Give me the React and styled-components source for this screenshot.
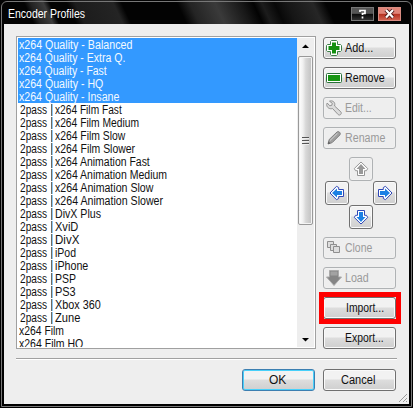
import React, { useLayoutEffect, useRef } from "react";
import styled, { createGlobalStyle, css } from "styled-components";

const Global = createGlobalStyle`
  * { box-sizing: border-box; }
  html, body { margin: 0; background: #000; overflow: hidden; }
  body { font: 12px/13px "Liberation Sans", Arial, sans-serif; color: #000; }
`;

const Window = styled.div`
  position: relative;
  width: 413px;
  height: 408px;
  padding: 4px;
  background: #000;
  display: flex;
  flex-direction: column;
`;
const FrameLine = styled.div`
  position: absolute;
  inset: 1px 1px 1px 1px;
  border: 1px solid #777;
  border-radius: 6px 6px 0 0;
  pointer-events: none;
`;
const TitleBar = styled.header`
  height: 24px;
  margin: -4px -4px 0;
  padding: 4px 12px 0 8px;
  display: flex;
  align-items: center;
  color: #fff;
  background:
    linear-gradient(65deg, transparent 8%, #222 9.5%, #3c3c3c 12.5%, transparent 14%, transparent 18%, #1c1c1c 20%, #242424 29%, transparent 31%, transparent 44%, #242424 47%, #3a3a3a 53%, #181818 59%, transparent 62%, #1c1c1c 64%, #080808 67%, #161616 70%, #262626 76%, transparent 79%),
    #030303;
`;
const Caption = styled.div`
  flex: 1;
  height: 13px;
`;
const CaptionButton = styled.div`
  width: 23px;
  height: 14px;
  margin-left: 4px;
  border: 1px solid ${(p) => (p.$close ? "#d98c82" : "#777")};
  background: ${(p) =>
    p.$close
      ? "linear-gradient(#e08478 0 45%, #b53020 50%, #d0604e)"
      : "linear-gradient(#555 0 45%, #080808 50%, #303030)"};
  svg { display: block; }
`;
const Client = styled.main`
  width: 405px;
  height: 380px;
  background: #eee;
  padding: 12px 12px 0;
  display: flex;
  flex-direction: column;
  position: relative;
`;
const Body = styled.div`
  display: flex;
  height: 322px;
  gap: 7px;
`;
const ListBox = styled.div`
  width: 300px;
  height: 313px;
  border: 1px solid #a0a0a0;
  padding: 1px;
  background: #fff;
  display: flex;
`;
const Rows = styled.div`
  width: 279px;
  height: 309px;
  overflow: hidden;
`;
const Row = styled.div`
  height: 13px;
  display: flex;
  padding: 1px 0 0 ${(p) => (p.$pass ? 2 : 1)}px;
  color: ${(p) => (p.$selected ? "#f4f9ff" : "#111")};
  background: ${(p) => (p.$selected ? "#3399ff" : "#fff")};
`;
const Bar = styled.span`
  width: 2px;
  height: 12px;
  margin: 0 2px 0 4px;
  border-left: 1px solid #6d6a62;
  background: #8cc8f4;
`;
const ScrollBar = styled.div`
  width: 17px;
  background: #eee;
  display: flex;
  flex-direction: column;
  align-items: center;
  svg { display: block; }
`;
const Thumb = styled.div`
  width: 15px;
  height: 169px;
  margin: 0 0 107px;
  border: 1px solid #999;
  border-radius: 2px;
  background: linear-gradient(90deg, #fff, #f0f0f0 30%, #d8d8d8 52%, #c0c0c0);
  box-shadow: inset 0 0 0 1px #f4f4f4;
  display: flex;
  align-items: center;
  justify-content: center;
`;
const Side = styled.div`
  width: 74px;
  padding-top: 1px;
  display: flex;
  flex-direction: column;
  gap: 8px;
`;
const face = css`
  border: 1px solid ${(p) => (p.$disabled ? "#afb2b4" : "#707070")};
  border-radius: 3px;
  background: ${(p) =>
    p.$disabled ? "#eee" : "linear-gradient(#f2f2f2 0 45%, #dddddd 50%, #cfcfcf)"};
  box-shadow: inset 0 0 0 1px ${(p) => (p.$disabled ? "#f1f1f1" : "#fafafa")};
`;
const Button = styled.div`
  ${face}
  width: 73px;
  height: 22px;
  flex: none;
  display: flex;
  align-items: center;
  padding-left: ${(p) => p.$indent ?? 2}px;
  color: ${(p) => (p.$disabled ? "#9a9a9a" : "#111")};
  position: relative;
  ${(p) =>
    p.$primary &&
    css`
      border-color: #3c7fb1;
      box-shadow: inset 0 0 0 1px #48d0fa;
    `}
`;
const IconSlot = styled.span`
  width: 19px;
  height: 16px;
  svg { display: block; }
`;
const Highlight = styled.div`
  position: absolute;
  inset: -6px -6px -6px -5px;
  border: 5px solid #fe0000;
`;
const Pad = styled.div`
  display: grid;
  grid-template: repeat(3, 24px) / repeat(3, 24px);
  margin-left: 2px;
`;
const PadButton = styled.div`
  ${face}
  grid-area: ${(p) => p.$area};
  display: flex;
  align-items: center;
  justify-content: center;
`;
const Separator = styled.div`
  height: 2px;
  width: 381px;
  background: linear-gradient(#a0a0a0 50%, #fff 50%);
`;
const Footer = styled.footer`
  display: flex;
  gap: 8px;
  padding: 9px 0 0 226px;
`;
const Grip = styled.svg`
  position: absolute;
  right: 1px;
  bottom: 1px;
`;
const FitBox = styled.span`
  display: block;
  height: 13px;
  flex: none;
  white-space: pre;
`;
const FitInner = styled.span`
  display: inline-block;
  transform-origin: 0 50%;
`;

function Fit({ w, children }) {
  const box = useRef(null);
  const inner = useRef(null);
  useLayoutEffect(() => {
    box.current.style.width = `${w}px`;
    inner.current.style.transform = `scaleX(${w / inner.current.offsetWidth})`;
  }, [w]);
  return (
    <FitBox ref={box}>
      <FitInner ref={inner}>{children}</FitInner>
    </FitBox>
  );
}

const profiles = [
  ["x264 Quality - Balanced", 113, "selected"],
  ["x264 Quality - Extra Q.", 106, "selected"],
  ["x264 Quality - Fast", 88, "selected"],
  ["x264 Quality - HQ", 84, "selected"],
  ["x264 Quality - Insane", 100, "selected"],
  ["x264 Film Fast", 67, "pass"],
  ["x264 Film Medium", 84, "pass"],
  ["x264 Film Slow", 70, "pass"],
  ["x264 Film Slower", 80, "pass"],
  ["x264 Animation Fast", 95, "pass"],
  ["x264 Animation Medium", 112, "pass"],
  ["x264 Animation Slow", 98, "pass"],
  ["x264 Animation Slower", 108, "pass"],
  ["DivX Plus", 46, "pass"],
  ["XviD", 23, "pass"],
  ["DivX", 24, "pass"],
  ["iPod", 21, "pass"],
  ["iPhone", 33, "pass"],
  ["PSP", 21, "pass"],
  ["PS3", 21, "pass"],
  ["Xbox 360", 46, "pass"],
  ["Zune", 25, "pass"],
  ["x264 Film", 45, "plain"],
  ["x264 Film HQ", 64, "plain"],
];

const icons = {
  add: (
    <>
      <path
        d="M4.500 1.500l1-1h5l1 1v3h3l1 1v5l-1 1h-3v3l-1 1h-5l-1-1v-3h-3l-1-1v-5l1-1h3z"
        fill="#fff"
        stroke="#3c8048"
      />
      <path d="M6 2.500h4V6h3.500v4H10v3.500H6V10H2.500V6H6z" fill="#12900f" />
    </>
  ),
  remove: (
    <>
      <rect x=".5" y="3.500" width="15" height="9" rx="1" fill="#fff" stroke="#287038" />
      <rect x="2" y="5" width="12" height="6" fill="#179512" />
    </>
  ),
  edit: (
    <path
      d="M3.500 1.200C5.800.2 8.800 1.500 8.800 4.300L8.600 6l6.200 5.800c1.500 1.700-.8 4.300-2.600 2.800L6.500 8.500C3.500 9.400.6 7.500.7 4.500L1.200 3l2.600 2.800 2-.5.500-2z"
      fill="#dcdcdc"
      stroke="#929292"
    />
  ),
  rename: (
    <>
      <path d="M2 14l1.200-4.500L11 2q1.300-1 2.600.3t.3 2.600L6.200 12.600z" fill="#a0a0a0" stroke="#808080" />
      <path d="M4 10.500l7.500-7.300" stroke="#d5d5d5" />
      <path d="M2 14l.6-2.400 1.700 1.700z" fill="#555" />
    </>
  ),
  clone: (
    <g fill="#dedede" stroke="#8f8f8f">
      <path d="M1.500 1.500h6v6h-6z" />
      <path d="M4.500 4.500h6v6h-6z" />
      <path d="M7.500 6.500h6v6h-6z" />
    </g>
  ),
  load: (
    <>
      <path d="M3.500.5h9V7h3L8 15.500.5 7h3z" fill="#858585" stroke="#aaa" />
      <path d="M4.500 1.500h7v4h-7z" fill="#a2a2a2" />
    </>
  ),
};

const Icon = ({ name }) => (
  <IconSlot>
    <svg width="16" height="16" viewBox="0 0 16 16" fill="none">
      {icons[name]}
    </svg>
  </IconSlot>
);

const Arrow = ({ angle, off }) => (
  <svg width="16" height="16" viewBox="0 0 16 16">
    <g transform={`rotate(${angle} 8 8)`}>
      <path
        d="M8 1L14.700 7.500L13.500 9.700H11.500V14.500H4.500V9.700H2.500L1.300 7.500z"
        fill="#fff"
        stroke={off ? "#969696" : "#3048b8"}
        strokeLinejoin="round"
      />
      <path d="M8 3L12.500 8H10V13H6V8H3.500z" fill={off ? "#999" : "#1c80e4"} />
    </g>
  </svg>
);

const Action = ({ icon, label, w, disabled }) => (
  <Button $disabled={disabled}>
    <Icon name={icon} />
    <Fit w={w}>{label}</Fit>
  </Button>
);

export default function App() {
  return (
    <>
      <Global />
      <Window>
        <TitleBar>
          <Caption>
            <Fit w={77}>Encoder Profiles</Fit>
          </Caption>
          <CaptionButton>
            <svg width="21" height="12" fill="none">
              <path d="M8 4V2.500h5V5.500h-2.500V7M10.500 8.500v2" stroke="#fff" strokeWidth="1.700" />
            </svg>
          </CaptionButton>
          <CaptionButton $close>
            <svg width="21" height="12" fill="none">
              <path d="M7 2l7 7.500M14 2L7 9.500" stroke="#411" strokeWidth="4" />
              <path d="M7 2l7 7.500M14 2L7 9.500" stroke="#fff" strokeWidth="2.200" />
            </svg>
          </CaptionButton>
        </TitleBar>
        <Client>
          <Body>
            <ListBox>
              <Rows>
                {profiles.map(([name, w, kind]) => (
                  <Row key={kind + name} $selected={kind === "selected"} $pass={kind === "pass"}>
                    {kind === "pass" && (
                      <>
                        <Fit w={27}>2pass</Fit>
                        <Bar />
                      </>
                    )}
                    <Fit w={w}>{name}</Fit>
                  </Row>
                ))}
              </Rows>
              <ScrollBar>
                <svg width="17" height="18">
                  <path d="M5 10h7L8.500 6.500z" />
                </svg>
                <Thumb>
                  <svg width="7" height="8">
                    <path d="M0 .5h7M0 3.500h7M0 6.500h7" stroke="#555" />
                    <path d="M0 1.500h7M0 4.500h7M0 7.500h7" stroke="#eee" />
                  </svg>
                </Thumb>
                <svg width="17" height="15">
                  <path d="M5 6h7L8.500 9.500z" />
                </svg>
              </ScrollBar>
            </ListBox>
            <Side>
              <Action icon="add" label="Add..." w={28} />
              <Action icon="remove" label="Remove" w={40} />
              <Action icon="edit" label="Edit..." w={27} disabled />
              <Action icon="rename" label="Rename" w={40} disabled />
              <Pad>
                <PadButton $area="1 / 2" $disabled><Arrow angle={0} off /></PadButton>
                <PadButton $area="2 / 1"><Arrow angle={-90} /></PadButton>
                <PadButton $area="2 / 3"><Arrow angle={90} /></PadButton>
                <PadButton $area="3 / 2"><Arrow angle={180} /></PadButton>
              </Pad>
              <Action icon="clone" label="Clone" w={27} disabled />
              <Action icon="load" label="Load" w={24} disabled />
              <Button $indent={22}>
                <Fit w={38}>Import...</Fit>
                <Highlight />
              </Button>
              <Button $indent={21}>
                <Fit w={39}>Export...</Fit>
              </Button>
            </Side>
          </Body>
          <Separator />
          <Footer>
            <Button $primary $indent={26}><Fit w={17}>OK</Fit></Button>
            <Button $indent={17}><Fit w={34}>Cancel</Fit></Button>
          </Footer>
          <Grip width="10" height="10">
            <path d="M1 9L9 1M5 9l4-4M8 9l1-1" stroke="#999" />
          </Grip>
        </Client>
        <FrameLine />
      </Window>
    </>
  );
}
